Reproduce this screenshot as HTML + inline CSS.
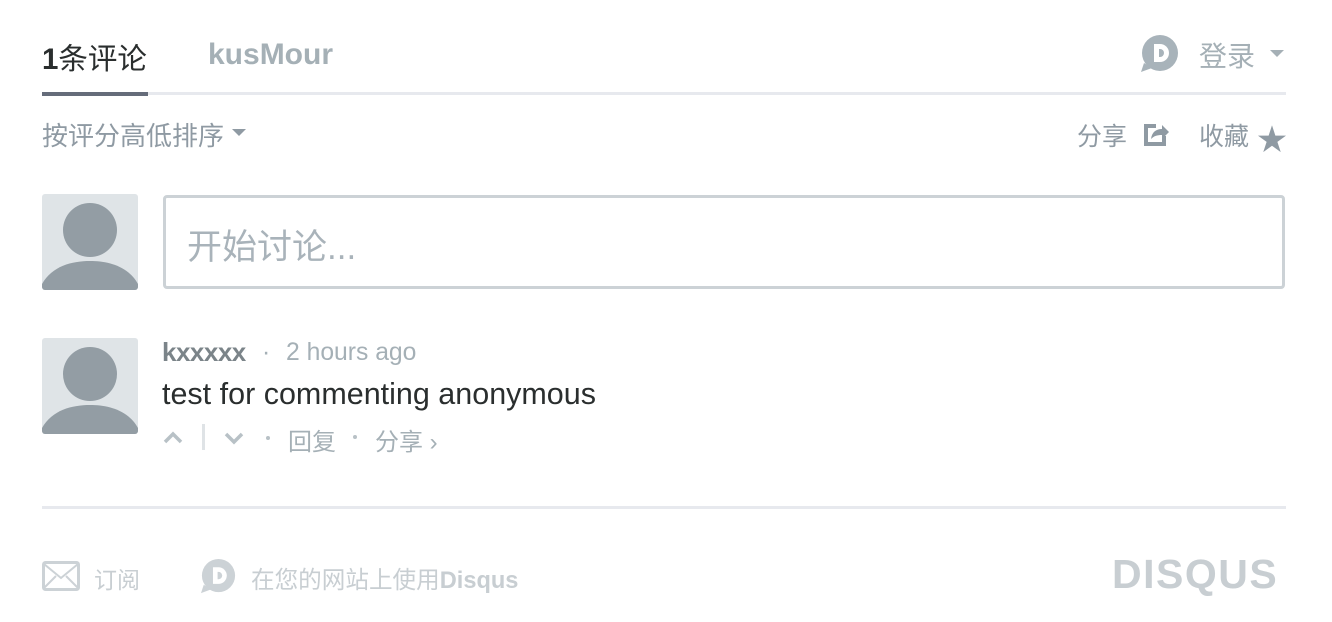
<!DOCTYPE html>
<html><head><meta charset="utf-8"><style>
*{margin:0;padding:0;box-sizing:border-box}
body{width:1332px;height:622px;background:#fff;font-family:"Liberation Sans","Noto Sans CJK SC",sans-serif;position:relative;overflow:hidden}
.a{position:absolute;white-space:nowrap}
</style></head><body>
<div class="a" style="left:42px;top:36px;font-size:29.5px;font-weight:bold;color:#2a2e2e">1<span style="font-weight:normal">条评论</span></div>
<div class="a" style="left:208px;top:38px;font-size:30px;font-weight:bold;color:#a5b0b6">kusMour</div>
<div class="a" style="left:42px;top:92px;width:1244px;height:3px;background:#e7e9ee"></div>
<div class="a" style="left:42px;top:92px;width:106px;height:4px;background:#656c7a"></div>
<svg class="a" style="left:1140px;top:35px" width="40" height="38" viewBox="0 0 40 38"><circle cx="20" cy="18" r="18" fill="#a8b3ba"/><path d="M4 28 L1 37 L12 33Z" fill="#a8b3ba"/><path d="M14 9h6a9 9 0 0 1 0 18h-6z" fill="#fff"/><path d="M19 14h1a4 4 0 0 1 0 8h-1z" fill="#a8b3ba"/></svg>
<div class="a" style="left:1199px;top:35px;font-size:28px;color:#a5b0b6">登录</div>
<div class="a" style="left:1270px;top:50px;border:7px solid transparent;border-top:7px solid #a5b0b6;border-bottom:0"></div>
<div class="a" style="left:42px;top:116px;font-size:26px;color:#8f9aa3">按评分高低排序</div>
<div class="a" style="left:232px;top:129px;border:7px solid transparent;border-top:7px solid #8f9aa3;border-bottom:0"></div>
<div class="a" style="left:1077px;top:117px;font-size:25px;color:#8f9aa3">分享</div>
<svg class="a" style="left:1142px;top:120px" width="28" height="28" viewBox="0 0 28 28"><path d="M2 4h12v4H6v14h14v-6h4v10H2z" fill="#8f9aa3"/><path d="M9 19c1-7 5-10 11-10V5l7 7-7 7v-4c-5 0-8 1-11 4z" fill="#8f9aa3"/></svg>
<div class="a" style="left:1199px;top:117px;font-size:25px;color:#8f9aa3">收藏</div>
<div class="a" style="left:1257px;top:115px;font-size:30px;color:#8f9aa3">★</div>
<svg class="a" style="left:42px;top:194px" width="96" height="96" viewBox="0 0 96 96"><rect width="96" height="96" rx="3" fill="#dfe4e7"/><circle cx="48" cy="36" r="27" fill="#939da4"/><path d="M0 90c10-18 30-23 48-23s38 5 48 23v3a3 3 0 0 1-3 3H3a3 3 0 0 1-3-3z" fill="#939da4"/></svg>
<div class="a" style="left:163px;top:195px;width:1122px;height:94px;border:3px solid #ccd2d6;border-radius:4px"></div>
<div class="a" style="left:187px;top:219px;font-size:35px;color:#a9b3ba">开始讨论...</div>
<svg class="a" style="left:42px;top:338px" width="96" height="96" viewBox="0 0 96 96"><rect width="96" height="96" rx="3" fill="#dfe4e7"/><circle cx="48" cy="36" r="27" fill="#939da4"/><path d="M0 90c10-18 30-23 48-23s38 5 48 23v3a3 3 0 0 1-3 3H3a3 3 0 0 1-3-3z" fill="#939da4"/></svg>
<div class="a" style="left:162px;top:337px;font-size:26px;font-weight:bold;color:#7b8489;letter-spacing:-0.5px">kxxxxx</div>
<div class="a" style="left:262px;top:339px;font-size:24.7px;color:#a5b0b6">·</div>
<div class="a" style="left:286px;top:339px;font-size:24.7px;color:#a5b0b6">2 hours ago</div>
<div class="a" style="left:162px;top:377px;font-size:30.5px;color:#2a2e2e">test for commenting anonymous</div>
<svg class="a" style="left:162px;top:422px" width="120" height="30" viewBox="0 0 120 30"><path d="M3 20l8-8 8 8" stroke="#b8c1c6" stroke-width="3.5" fill="none"/><rect x="40" y="2" width="3" height="26" fill="#dfe3e6"/><path d="M64 12l8 8 8-8" stroke="#b8c1c6" stroke-width="3.5" fill="none"/><circle cx="106" cy="16" r="2" fill="#b8c1c6"/></svg>
<div class="a" style="left:288px;top:422px;font-size:24px;color:#a5b0b6">回复</div>
<svg class="a" style="left:352px;top:434px" width="6" height="6"><circle cx="3" cy="3" r="2" fill="#b8c1c6"/></svg>
<div class="a" style="left:375px;top:422px;font-size:24px;color:#a5b0b6">分享 ›</div>
<div class="a" style="left:42px;top:506px;width:1244px;height:3px;background:#e7e9ee"></div>
<svg class="a" style="left:42px;top:561px" width="38" height="30" viewBox="0 0 38 30"><rect x="1.5" y="1.5" width="35" height="27" rx="2" stroke="#ccd2d6" stroke-width="3" fill="none"/><path d="M2 3l17 14 17-14M2 27l12-12M36 27l-12-12" stroke="#ccd2d6" stroke-width="2" fill="none"/></svg>
<div class="a" style="left:94px;top:561px;font-size:23px;color:#c8ced2">订阅</div>
<svg class="a" style="left:200px;top:559px" width="37" height="35" viewBox="0 0 40 38"><circle cx="20" cy="18" r="18" fill="#ccd2d6"/><path d="M4 28 L1 37 L12 33Z" fill="#ccd2d6"/><path d="M14 9h6a9 9 0 0 1 0 18h-6z" fill="#fff"/><path d="M19 14h1a4 4 0 0 1 0 8h-1z" fill="#ccd2d6"/></svg>
<div class="a" style="left:251px;top:561px;font-size:23.6px;color:#c8ced2">在您的网站上使用<b>Disqus</b></div>
<div class="a" style="left:1112px;top:551px;font-size:41px;font-weight:900;color:#c8ced2;letter-spacing:1.5px">DISQUS</div>
</body></html>
